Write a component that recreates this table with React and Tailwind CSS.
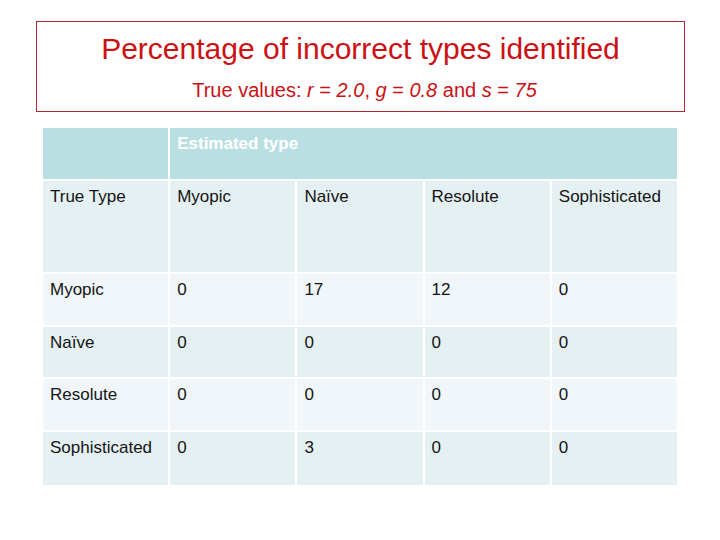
const columns = ["Myopic", "Naïve", "Resolute", "Sophisticated"];

const rows = [
  { label: "Myopic", values: ["0", "17", "12", "0"], height: "h-[51px]", bg: "bg-[#f0f6f9]" },
  { label: "Naïve", values: ["0", "0", "0", "0"], height: "h-[50px]", bg: "bg-[#e5f0f3]" },
  { label: "Resolute", values: ["0", "0", "0", "0"], height: "h-[51px]", bg: "bg-[#f0f6f9]" },
  { label: "Sophisticated", values: ["0", "3", "0", "0"], height: "h-[53px]", bg: "bg-[#e5f0f3]" },
];

function Cell({ children, className = "" }) {
  return <div className={`px-[7px] pt-[6px] leading-[20px] ${className}`}>{children}</div>;
}

export default function App() {
  return (
    <div className="w-[720px] h-[540px] bg-white font-['Liberation_Sans',Arial,sans-serif] overflow-hidden">
      <div className="pt-[21px] pl-[36px]">
        <div className="w-[649px] h-[91px] border border-[#b22a30] flex flex-col items-center text-[#cc1014]">
          <h1 className="mt-[10px] text-[30px] leading-[34px]">Percentage of incorrect types identified</h1>
          <p className="mt-[12px] ml-[8px] text-[20px] leading-[24px]">
            True values: <i>r</i> = <i>2.0</i>, <i>g</i> = <i>0.8</i> and <i>s</i> = <i>75</i>
          </p>
        </div>
      </div>

      <div className="mt-[16px] ml-[43px] w-[634px] grid grid-cols-5 gap-[2px] text-[17px] text-[#141414]">
        <div className="h-[51px] bg-[#badfe3]" />
        <Cell className="col-span-4 h-[51px] bg-[#badfe3] font-bold text-white">Estimated type</Cell>

        <Cell className="h-[91px] bg-[#e5f0f3]">True Type</Cell>
        {columns.map((c) => (
          <Cell key={c} className="h-[91px] bg-[#e5f0f3]">{c}</Cell>
        ))}

        {rows.map((r) => (
          <div key={r.label} className="contents">
            <Cell className={`${r.height} ${r.bg}`}>{r.label}</Cell>
            {r.values.map((v, i) => (
              <Cell key={i} className={`${r.height} ${r.bg}`}>{v}</Cell>
            ))}
          </div>
        ))}
      </div>
    </div>
  );
}
